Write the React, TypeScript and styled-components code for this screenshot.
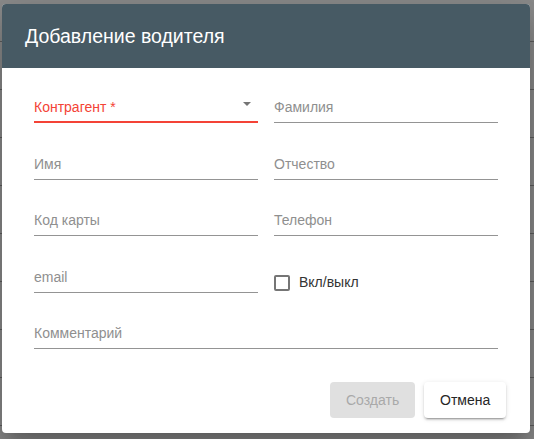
import React from 'react';
import styled, { createGlobalStyle } from 'styled-components';

const GlobalStyle = createGlobalStyle`
  html, body {
    margin: 0;
    padding: 0;
  }

  body {
    width: 534px;
    height: 439px;
    overflow: hidden;
    font-family: 'Liberation Sans', Arial, sans-serif;
    background-color: #8c8c8c;
    background-image: repeating-linear-gradient(
      to bottom,
      transparent 0,
      transparent 41px,
      #5f5f5f 41px,
      #5f5f5f 42px,
      transparent 42px,
      transparent 48px
    );
  }
`;

const Backdrop = styled.div`
  padding: 4px 4px 0 2px;
`;

const Dialog = styled.div`
  width: 528px;
  height: 429px;
  display: flex;
  flex-direction: column;
  background: #fff;
  border-radius: 4px;
  overflow: hidden;
  box-shadow: 0 11px 15px -7px rgba(0, 0, 0, 0.2), 0 24px 38px 3px rgba(0, 0, 0, 0.14),
    0 9px 46px 8px rgba(0, 0, 0, 0.12);
`;

const Header = styled.div`
  height: 64px;
  flex: none;
  display: flex;
  align-items: center;
  padding: 0 23px;
  background: #475a64;
`;

const Title = styled.h2`
  margin: 0;
  color: #fff;
  font-size: 19.5px;
  font-weight: 400;
`;

const Content = styled.div`
  padding: 23px 32px 0;
  display: grid;
  grid-template-columns: 224px 224px;
  column-gap: 16px;
  row-gap: 24.5px;
`;

const Field = styled.div<{ $error?: boolean; $wide?: boolean }>`
  position: relative;
  height: 32px;
  box-sizing: border-box;
  display: flex;
  align-items: flex-end;
  padding-bottom: ${({ $error }) => ($error ? 4 : 5)}px;
  border-bottom: ${({ $error }) => ($error ? '2px solid #f44336' : '1px solid #949494')};
  grid-column: ${({ $wide }) => ($wide ? '1 / span 2' : 'auto')};
`;

const Label = styled.span<{ $error?: boolean }>`
  font-size: 14px;
  line-height: 20px;
  color: ${({ $error }) => ($error ? '#f44336' : '#8f8f8f')};
`;

const Arrow = styled.svg`
  position: absolute;
  right: 7px;
  top: 11px;
  width: 8px;
  height: 4px;
  fill: #757575;
`;

const CheckRow = styled.label`
  height: 32px;
  display: flex;
  align-items: flex-end;
  padding-bottom: 1px;
  box-sizing: border-box;
  gap: 9px;
`;

const Box = styled.span`
  width: 16px;
  height: 16px;
  box-sizing: border-box;
  border: 2px solid #757575;
  border-radius: 2px;
  margin-bottom: 1px;
`;

const CheckText = styled.span`
  font-size: 14px;
  line-height: 20px;
  color: #333;
`;

const Actions = styled.div`
  margin-top: auto;
  display: flex;
  justify-content: flex-end;
  gap: 9px;
  padding: 0 24px 15px;
`;

const Button = styled.button<{ $disabled?: boolean }>`
  height: 36px;
  padding: 0 16px;
  border: none;
  border-radius: 4px;
  font-family: inherit;
  font-size: 14px;
  color: ${({ $disabled }) => ($disabled ? '#a9a9a9' : '#262626')};
  background: ${({ $disabled }) => ($disabled ? '#e0e0e0' : '#fff')};
  box-shadow: ${({ $disabled }) =>
    $disabled
      ? 'none'
      : '0 3px 1px -2px rgba(0,0,0,0.2), 0 2px 2px 0 rgba(0,0,0,0.14), 0 1px 5px 0 rgba(0,0,0,0.12)'};
`;

const fields = [
  ['Имя', 'Отчество'],
  ['Код карты', 'Телефон'],
];

const App: React.FC = () => {
  return (
    <>
      <GlobalStyle />
      <Backdrop>
        <Dialog>
          <Header>
            <Title>Добавление водителя</Title>
          </Header>
          <Content>
            <Field $error>
              <Label $error>Контрагент *</Label>
              <Arrow viewBox="0 0 8 4">
                <polygon points="0,0 8,0 4,4" />
              </Arrow>
            </Field>
            <Field>
              <Label>Фамилия</Label>
            </Field>
            {fields.flat().map((name) => (
              <Field key={name}>
                <Label>{name}</Label>
              </Field>
            ))}
            <Field>
              <Label>email</Label>
            </Field>
            <CheckRow>
              <Box />
              <CheckText>Вкл/выкл</CheckText>
            </CheckRow>
            <Field $wide>
              <Label>Комментарий</Label>
            </Field>
          </Content>
          <Actions>
            <Button $disabled style={{ width: 85 }}>
              Создать
            </Button>
            <Button style={{ width: 82 }}>Отмена</Button>
          </Actions>
        </Dialog>
      </Backdrop>
    </>
  );
};

export default App;
